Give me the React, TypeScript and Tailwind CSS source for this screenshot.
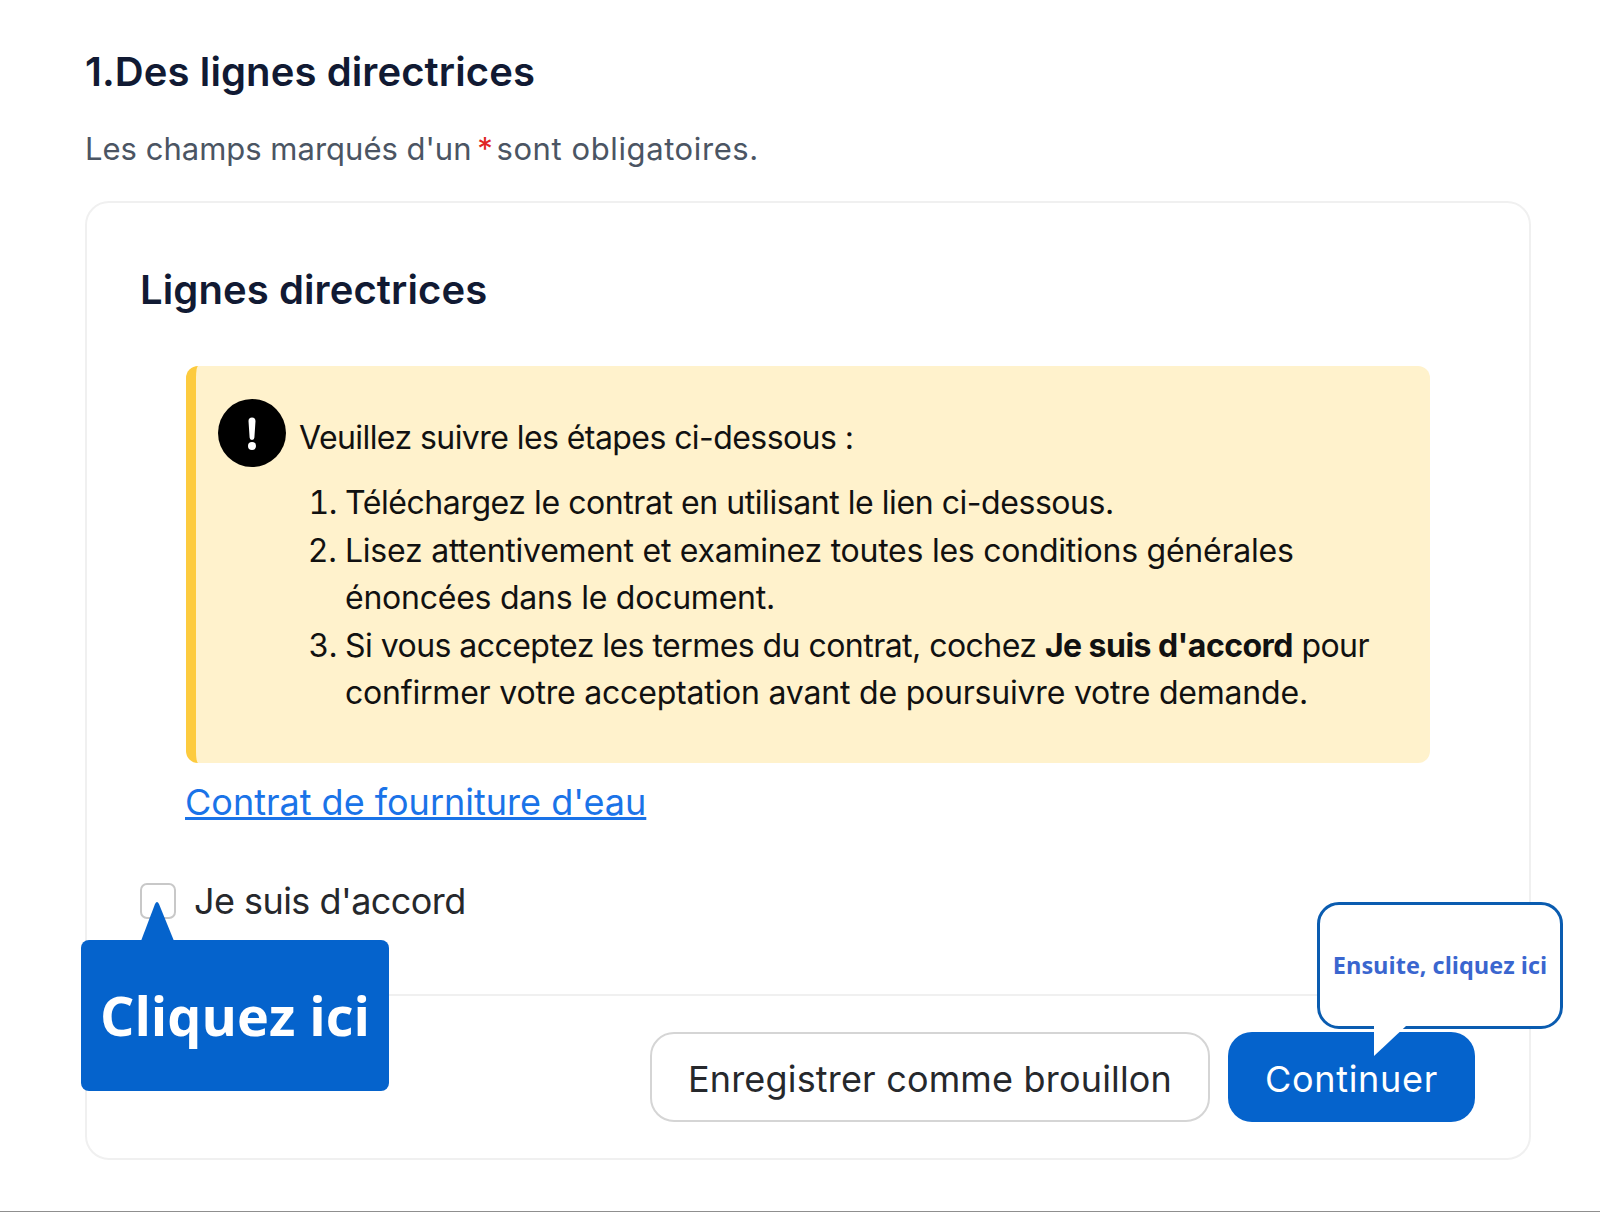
import React from "react";

const sans = "font-['Inter','Liberation_Sans',sans-serif]";

const App: React.FC = () => {
  return (
    <div className={`relative h-[1212px] w-[1600px] overflow-hidden bg-white ${sans}`}>
      <div className="border-b border-[#8f8f8f] h-[1212px] pl-[85px] pt-[44px]">
        <h1 className="text-[40px] leading-[56px] font-semibold tracking-[0.1px] text-[#111a33]">
          1.Des lignes directrices
        </h1>
        <p className="mt-[31px] text-[31px] leading-[36px] text-[#4b5563]">
          Les champs marqués d'un <span className="-ml-[3px] -mr-[5px] text-[#e02424]">*</span>{" "}
          <span className="tracking-[0.6px]">sont obligatoires.</span>
        </p>
        <div className="mt-[34px] w-[1446px] h-[959px] rounded-[24px] border-2 border-[#f0f0f0] pt-[59px] flex flex-col">
          <h2 className="pl-[53px] text-[40px] leading-[56px] font-semibold tracking-[0.1px] text-[#111a33]">
            Lignes directrices
          </h2>
          <div className="ml-[99px] mt-[48px] w-[1244px] h-[397px] rounded-[12px] border-l-[10px] border-[#fdcb3e] bg-[#fff2cc] pl-[22px] pt-[33px] text-[32px] leading-[47.5px] tracking-[-0.57px] text-[#111111]">
            <div className="flex items-start gap-[13px]">
              <svg width="68" height="68" viewBox="0 0 68 68">
                <circle cx="34" cy="34" r="34" fill="#000000" />
                <path d="M30.5 22 a3.5 3.5 0 0 1 7 0 L36.4 38.5 a2.4 2.4 0 0 1 -4.8 0 Z" fill="#ffffff" />
                <circle cx="34" cy="47" r="4" fill="#ffffff" />
              </svg>
              <span className="pt-[15px]">Veuillez suivre les étapes ci-dessous :</span>
            </div>
            <ol className="mt-[12px] ml-[127px] w-[1052px] list-decimal tracking-[-0.44px]">
              <li>Téléchargez le contrat en utilisant le lien ci-dessous.</li>
              <li className="tracking-[-0.24px]">
                Lisez attentivement et examinez toutes les conditions générales énoncées dans le document.
              </li>
              <li>
                <span className="tracking-[-0.54px]">
                  Si vous acceptez les termes du contrat, cochez <b className="font-bold">Je suis d'accord</b> pour
                </span>{" "}
                <span className="tracking-[-0.2px]">
                  confirmer votre acceptation avant de poursuivre votre demande.
                </span>
              </li>
            </ol>
          </div>
          <a className="ml-[98px] mt-[16px] self-start text-[36px] leading-[46px] text-[#1a73e8] underline">
            Contrat de fourniture d'eau
          </a>
          <label className="ml-[53px] mt-[54px] flex items-center gap-[18px] text-[36px] leading-[44px] tracking-[-0.55px] text-[#26282c]">
            <span className="h-[36px] w-[36px] rounded-[7px] border-2 border-[#c8c8c8] bg-white" />
            Je suis d'accord
          </label>
          <div className="mt-[71px] flex justify-end gap-[18px] border-t-2 border-[#f0f0f0] pr-[54px] pt-[36px]">
            <button className="h-[90px] w-[560px] rounded-[24px] border-2 border-[#d5d5d5] bg-white pt-[3px] text-[36px] tracking-[0.18px] text-[#26282c]">
              Enregistrer comme brouillon
            </button>
            <button className="h-[90px] w-[247px] rounded-[24px] bg-[#0563cc] pt-[3px] text-[36px] tracking-[0.7px] text-white">
              Continuer
            </button>
          </div>
        </div>
      </div>

      {/* callout on checkbox */}
      <div className="absolute left-[81px] top-[940px] flex h-[151px] w-[308px] items-center justify-center rounded-[8px] bg-[#0563cc] font-['Open_Sans',sans-serif] text-[54px] font-bold text-white">
        Cliquez ici
      </div>
      <svg className="absolute left-[140px] top-[900px]" width="36" height="41" viewBox="0 0 36 41">
        <path d="M1 41 L15 4 Q17 0 19 4 L34 41 Z" fill="#0563cc" />
      </svg>

      {/* callout on continue */}
      <div className="absolute left-[1317px] top-[902px] flex h-[127px] w-[246px] items-center justify-center rounded-[22px] border-[3px] border-[#0a5cb0] bg-white font-['Open_Sans',sans-serif] text-[23.5px] font-bold text-[#3a66cf]">
        Ensuite, cliquez ici
      </div>
      <svg className="absolute left-[1372px] top-[1026px]" width="36" height="32" viewBox="0 0 36 32">
        <path d="M2 0 L2 30 L34 0 Z" fill="#ffffff" />
      </svg>
    </div>
  );
};

export default App;
